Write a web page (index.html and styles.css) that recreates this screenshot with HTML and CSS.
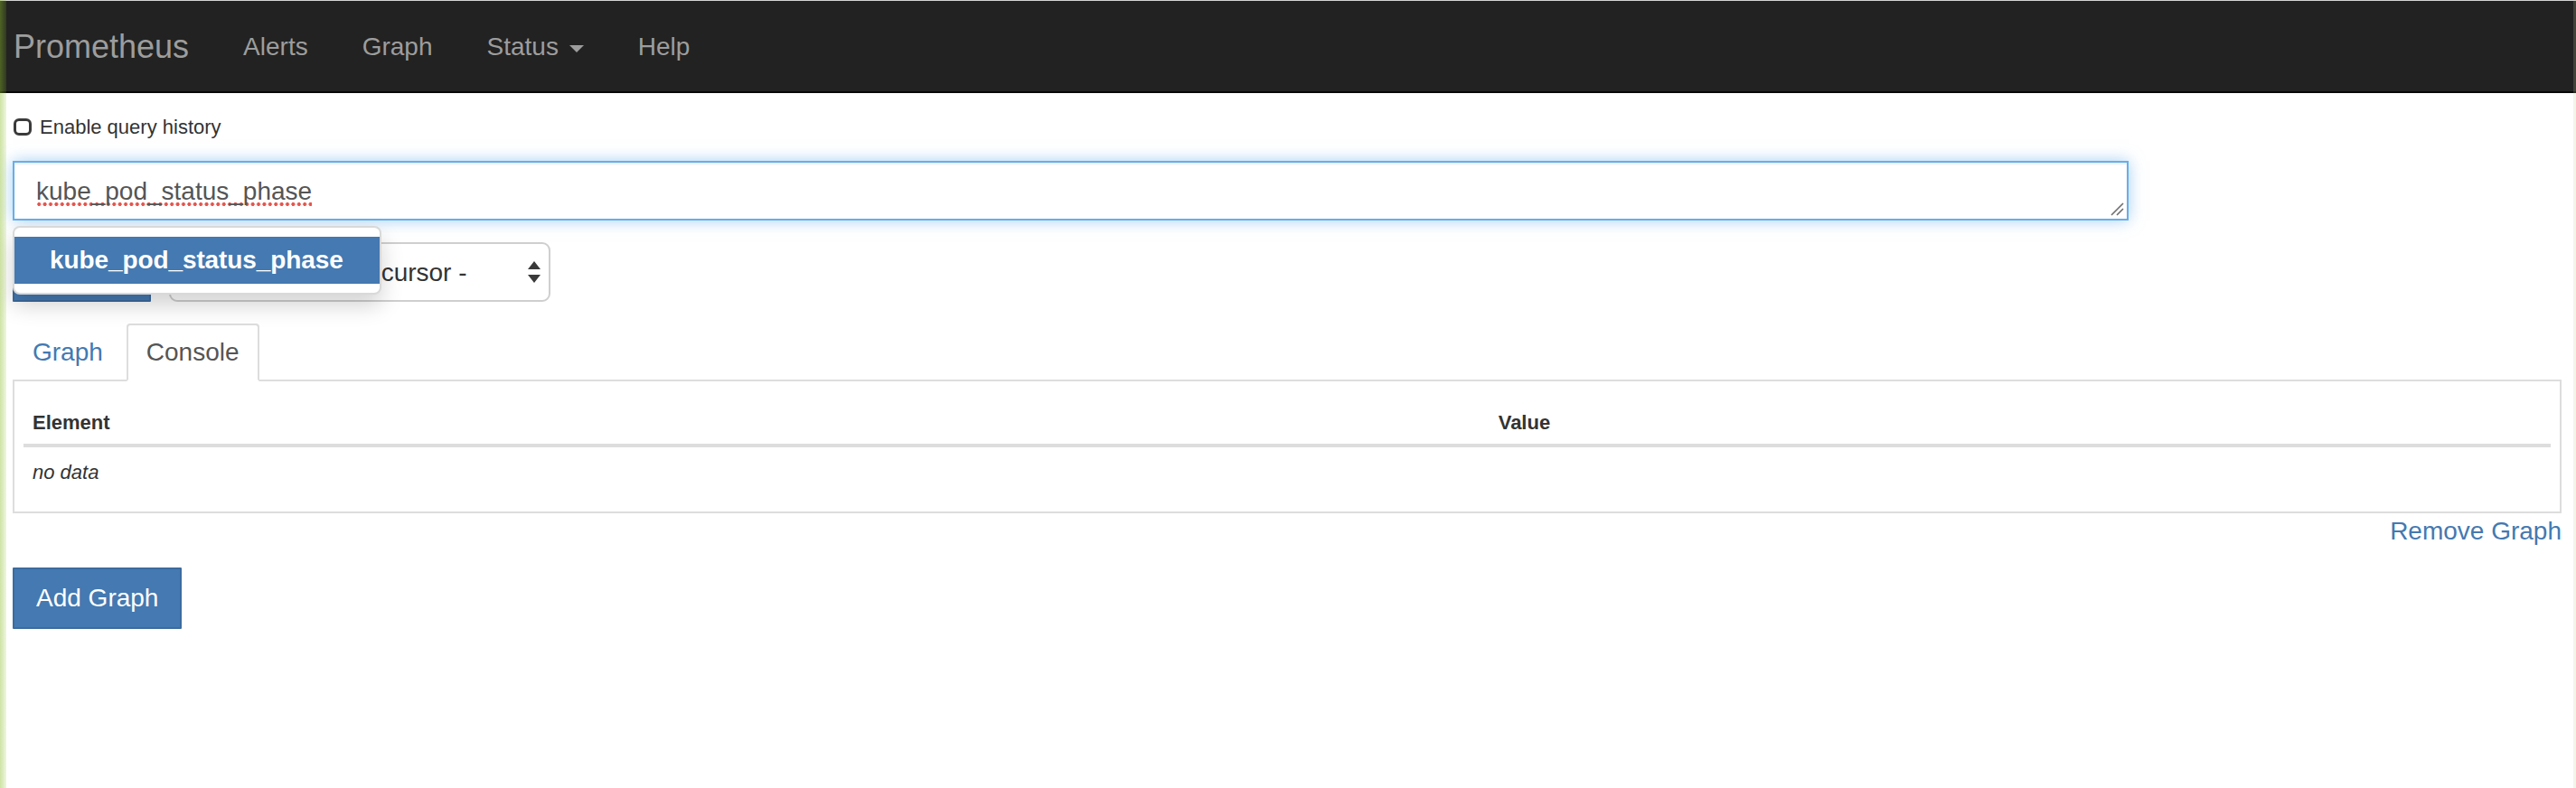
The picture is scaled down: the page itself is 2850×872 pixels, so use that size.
FILE: index.html
```html
<!DOCTYPE html>
<html lang="en">
<head>
<meta charset="utf-8">
<title>Prometheus Time Series Collection and Processing Server</title>
<link rel="stylesheet" href="styles.css">
</head>
<body>
<div class="edge-left"></div>
<div class="edge-right"></div>
<nav class="navbar">
  <a class="brand" href="#">Prometheus</a>
  <ul class="nav">
    <li><a href="#">Alerts</a></li>
    <li><a href="#">Graph</a></li>
    <li><a href="#">Status <span class="caret"></span></a></li>
    <li><a href="#">Help</a></li>
  </ul>
</nav>
<main class="container">
  <div class="history">
    <input type="checkbox" class="check" id="qh">
    <label for="qh">Enable query history</label>
  </div>
  <div class="expr-wrap">
    <div class="expr"><span class="misspelled">kube_pod_status_phase</span>
      <svg class="grip" width="16" height="16" viewBox="0 0 16 16"><path d="M15 2 L2 15 M15 8 L8 15" stroke="#6e6e6e" stroke-width="1.6" fill="none"/></svg>
    </div>
    <ul class="autocomplete">
      <li class="active"><a href="#">kube_pod_status_phase</a></li>
    </ul>
  </div>
  <div class="controls">
    <button class="btn btn-primary" type="button">Execute</button>
    <div class="select-wrap">
      <select class="select"><option>- insert metric at cursor -</option></select>
      <svg class="arrows" width="16" height="26" viewBox="0 0 16 26"><path d="M8 1 L15 10 L1 10 Z M1 16 L15 16 L8 25 Z" fill="#3a3a3a"/></svg>
    </div>
  </div>
  <div class="tabs">
    <ul class="nav-tabs">
      <li><a href="#">Graph</a></li>
      <li class="active"><a href="#">Console</a></li>
    </ul>
    <div class="tab-content">
      <table class="table">
        <thead>
          <tr><th class="col-el">Element</th><th>Value</th></tr>
        </thead>
        <tbody>
          <tr><td colspan="2"><i>no data</i></td></tr>
        </tbody>
      </table>
    </div>
  </div>
  <div class="remove-row"><a href="#">Remove Graph</a></div>
  <button class="btn btn-primary add" type="button">Add Graph</button>
</main>
</body>
</html>
```

FILE: styles.css
```css
* { box-sizing: border-box; }

html, body { margin: 0; padding: 0; }

body {
  font-family: "Liberation Sans", Arial, Helvetica, sans-serif;
  font-size: 28px;
  line-height: 40px;
  color: #333;
  background: #fff;
  min-height: 872px;
  overflow: hidden;
}

a { text-decoration: none; }

.edge-left {
  position: fixed;
  left: 0; top: 0; bottom: 0;
  width: 7px;
  background: linear-gradient(to right, rgba(140, 190, 40, 0.42), rgba(140, 190, 40, 0.14));
  z-index: 20;
}

.edge-right {
  position: fixed;
  right: 0; top: 0; bottom: 0;
  width: 3px;
  background: rgba(200, 200, 150, 0.2);
  z-index: 20;
}

/* navbar */
.navbar {
  display: flex;
  align-items: flex-start;
  height: 103px;
  background: #222;
  border-top: 1px solid #d4d4d4;
  border-bottom: 2px solid #080808;
  padding-left: 15px;
}

.brand {
  font-size: 36px;
  line-height: 40px;
  padding: 31px 30px 29px 0;
  color: #9d9d9d;
}

.nav {
  display: flex;
  list-style: none;
  margin: 0;
  padding: 0;
}

.nav a {
  display: block;
  padding: 31px 30px 30px;
  line-height: 40px;
  color: #9d9d9d;
}

.caret {
  display: inline-block;
  width: 0;
  height: 0;
  margin-left: 4px;
  vertical-align: middle;
  border-top: 8px solid #9d9d9d;
  border-left: 8px solid transparent;
  border-right: 8px solid transparent;
}

/* main */
.container {
  padding: 0 16px 0 14px;
}

.history {
  display: flex;
  align-items: center;
  gap: 9px;
  margin-top: 22px;
  font-size: 22px;
  line-height: 31px;
}

.check {
  appearance: none;
  -webkit-appearance: none;
  width: 20px;
  height: 19px;
  margin: 0 0 0 1px;
  border: 3px solid #3a3a3a;
  border-radius: 6px;
  background: #fff;
}

.expr-wrap {
  position: relative;
  width: 83%;
  margin-top: 22px;
}

.expr {
  position: relative;
  height: 66px;
  padding: 12px 24px 10px;
  border: 2px solid #66afe9;
  box-shadow: inset 0 2px 2px rgba(0, 0, 0, 0.075), 0 0 16px rgba(102, 175, 233, 0.6);
  color: #555;
  background: #fff;
  line-height: 40px;
}

.misspelled {
  padding-bottom: 2px;
  background-image: radial-gradient(circle, #e5534b 1.7px, transparent 2.3px);
  background-size: 6.4px 6px;
  background-repeat: repeat-x;
  background-position: 0 100%;
}

.grip {
  position: absolute;
  right: 3px;
  bottom: 3px;
}

.autocomplete {
  position: absolute;
  left: 0;
  top: calc(100% + 6px);
  z-index: 5;
  margin: 0;
  padding: 10px 0;
  list-style: none;
  background: #fff;
  border: 2px solid rgba(0, 0, 0, 0.15);
  border-radius: 8px;
  box-shadow: 0 12px 24px rgba(0, 0, 0, 0.175);
}

.autocomplete a {
  display: block;
  padding: 6px 40px 6px 39px;
  line-height: 40px;
  font-weight: bold;
  letter-spacing: -0.1px;
  color: #fff;
}

.autocomplete .active a {
  background: #4479b1;
}

.controls {
  display: flex;
  gap: 20px;
  margin-top: 24px;
  height: 66px;
}

.btn {
  font-family: inherit;
  font-size: 28px;
  line-height: 40px;
  padding: 12px 24px;
  border: 2px solid transparent;
  border-radius: 1px;
  cursor: pointer;
}

.controls .btn {
  padding-top: 11px;
  padding-bottom: 11px;
}

.btn-primary {
  color: #fff;
  background: #4479b1;
  border-color: #3c6b9f;
}

.select-wrap {
  position: relative;
  width: 422px;
}

.select {
  appearance: none;
  -webkit-appearance: none;
  width: 100%;
  height: 100%;
  padding: 0 24px;
  font-family: inherit;
  font-size: 28px;
  color: #333;
  background: #fff;
  border: 2px solid #cfcfcf;
  border-radius: 9px;
}

.arrows {
  position: absolute;
  right: 10px;
  top: 20px;
}

/* tabs */
.tabs {
  margin-top: 24px;
}

.nav-tabs {
  display: flex;
  list-style: none;
  margin: 0 0 -2px;
  padding: 0;
  position: relative;
  z-index: 1;
}

.nav-tabs a {
  display: block;
  margin-right: 4px;
  padding: 10px 20px;
  line-height: 40px;
  border: 2px solid transparent;
  border-radius: 4px 4px 0 0;
  color: #4479b1;
}

.nav-tabs .active a {
  color: #555;
  background: #fff;
  border-color: #ddd #ddd transparent;
}

.tab-content {
  border: 2px solid #ddd;
  padding: 10px;
}

.table {
  width: 100%;
  border-collapse: collapse;
  font-size: 22px;
  line-height: 31px;
}

.table th {
  text-align: left;
  font-weight: bold;
  padding: 20px 10px 8px;
  border-bottom: 4px solid #ddd;
}

.table .col-el { width: 58%; }

.table td {
  padding: 12px 10px 18px;
}

.remove-row {
  text-align: right;
  line-height: 40px;
}

.remove-row a { color: #4479b1; }

.add {
  margin-top: 20px;
}
```
